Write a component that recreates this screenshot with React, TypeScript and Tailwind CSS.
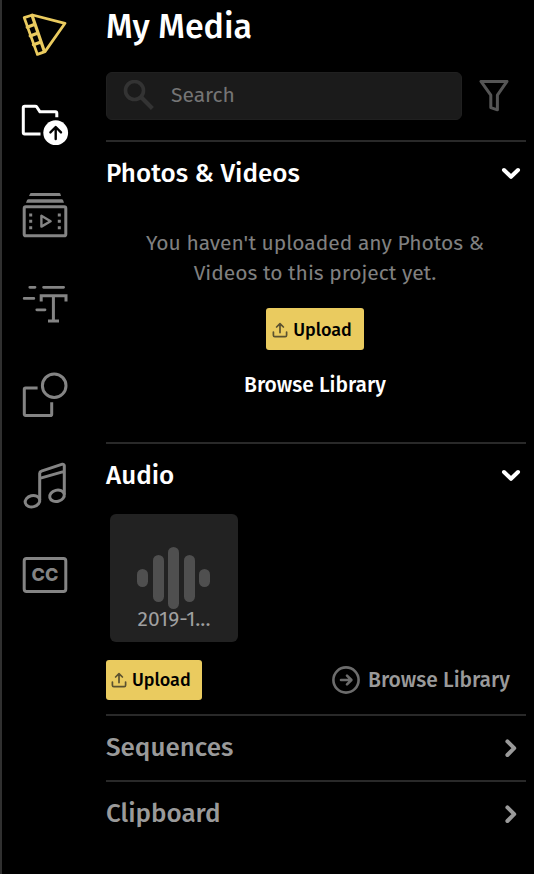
import type { ReactNode } from "react";

function RailIcon({ children }: { children: ReactNode }) {
  return (
    <svg
      viewBox="0 0 48 48"
      className="h-12 w-12"
      fill="none"
      stroke="currentColor"
      strokeWidth="3"
      strokeLinecap="round"
      strokeLinejoin="round"
      aria-hidden="true"
    >
      {children}
    </svg>
  );
}

const railItems: { label: string; tone: string; icon: ReactNode }[] = [
  {
    label: "Home",
    tone: "text-[#eacb5f]",
    icon: (
      <g strokeWidth="2.8">
        <path d="M3.2 6.6 11.5 4 44 12.3 24 40.6 16.4 43.4Z" />
        <path d="M11 4.3 23.3 40.3M6.2 16.2 13.8 13.3M9.2 24.9 17 22M12.4 33.8 20 31" strokeWidth="3.2" />
      </g>
    ),
  },
  {
    label: "My Media",
    tone: "text-white",
    icon: (
      <>
        <path d="M19.5 33H3.7a1.4 1.4 0 0 1-1.4-1.4V6.6A1.4 1.4 0 0 1 3.7 5.2H14.2a2 2 0 0 1 1.6.8L19 10.8H34.4a1.4 1.4 0 0 1 1.4 1.4V16.2" strokeLinecap="butt" />
        <circle cx="34.7" cy="31.7" r="12.4" fill="currentColor" stroke="none" />
        <path d="M34.7 38V26.4M29.4 31.4 34.7 26 40 31.4" stroke="#000" strokeWidth="2.4" />
      </>
    ),
  },
  {
    label: "Stock Media",
    tone: "text-[#848484]",
    icon: (
      <>
        <path d="M10.4 2H38a1.6 1.6 0 0 1 1.6 1.4L40 5H8L8.8 3.2A1.6 1.6 0 0 1 10.4 2Z" fill="currentColor" stroke="none" />
        <path d="M7.6 8.2H40.6a1.6 1.6 0 0 1 1.5 1.1L43 11.8H5L6 9.3A1.7 1.7 0 0 1 7.6 8.2Z" fill="currentColor" stroke="none" />
        <rect x="3.2" y="15.8" width="41.6" height="29" rx="1.6" strokeWidth="3" />
        <path d="M20.4 24.8V35.6L29.6 30.3Z" strokeWidth="2.4" />
        <path d="M8.2 22.6h3v3h-3zM8.2 28.8h3v3h-3zM8.2 35.2h3v3h-3zM36.8 22.6h3v3h-3zM36.8 28.8h3v3h-3zM36.8 35.2h3v3h-3z" fill="currentColor" stroke="none" />
      </>
    ),
  },
  {
    label: "Text",
    tone: "text-[#848484]",
    icon: (
      <>
        <path d="M8.8 6.3H14M22.6 6.3H42.6M3.2 17.4H12.8M15.8 28.8H24" strokeWidth="2.8" />
        <path d="M20.2 20.6V14.8H45V20.6M32.4 14.8V40M27 40H38" strokeLinecap="butt" strokeLinejoin="miter" />
      </>
    ),
  },
  {
    label: "Shapes",
    tone: "text-[#848484]",
    icon: (
      <>
        <circle cx="33.2" cy="14.7" r="11.8" />
        <path d="M16.6 17H4.6A1.3 1.3 0 0 0 3.3 18.3V43.2A1.3 1.3 0 0 0 4.6 44.5H29.4A1.3 1.3 0 0 0 30.7 43.2V31.2" strokeLinecap="butt" />
      </>
    ),
  },
  {
    label: "Music",
    tone: "text-[#848484]",
    icon: (
      <>
        <path d="M18.7 38.6V12.4A2.4 2.4 0 0 1 20.4 10.2L41.4 3.2A1.6 1.6 0 0 1 43.3 4.8V32.8M18.7 17.4 43.3 10.4" />
        <ellipse cx="11.5" cy="40.2" rx="7.4" ry="5.6" transform="rotate(-14 11.5 40.2)" />
        <ellipse cx="36" cy="34.8" rx="7.4" ry="5.6" transform="rotate(-14 36 34.8)" />
      </>
    ),
  },
  {
    label: "Captions",
    tone: "text-[#848484]",
    icon: (
      <>
        <rect x="3.2" y="7.5" width="41.6" height="33" rx="2.4" strokeWidth="3" />
        <text x="24" y="30.4" textAnchor="middle" fontSize="18" fontWeight="800" fill="currentColor" stroke="none" className="font-['Inter',sans-serif]">
          CC
        </text>
      </>
    ),
  },
];

function Chevron({ open }: { open: boolean }) {
  return (
    <svg viewBox="0 0 24 24" className="h-6 w-6" fill="none" stroke="currentColor" strokeWidth="4" strokeLinecap="round" strokeLinejoin="round" aria-hidden="true">
      <path d={open ? "M5 8 12 14.8 19 8" : "M8.4 5.4 15.2 12.2 8.4 19"} />
    </svg>
  );
}

function Section({ title, open = false, children }: { title: string; open?: boolean; children?: ReactNode }) {
  return (
    <section className="border-t-2 border-[#292929]">
      <h2>
        <button
          type="button"
          aria-expanded={open}
          className={`flex h-16 w-full items-center justify-between pr-[3px] pb-px text-left text-[26px] font-medium ${open ? "text-white" : "text-[#9a9a9a]"}`}
        >
          {title}
          <Chevron open={open} />
        </button>
      </h2>
      {children}
    </section>
  );
}

function UploadButton({ large = false }: { large?: boolean }) {
  return (
    <button
      type="button"
      className={`flex items-center rounded-[3px] bg-[#eacb5f] text-lg font-medium text-black ${large ? "h-[42px] gap-1 pt-px pr-3 pl-[5px]" : "h-10 gap-1 pr-[11px] pl-1"}`}
    >
      <svg viewBox="0 0 18 18" className="h-[18px] w-[18px]" fill="none" stroke="#5b5230" strokeWidth="1.7" strokeLinecap="round" strokeLinejoin="round" aria-hidden="true">
        <path d="M9 11.6V3M5.6 6 9 2.6 12.4 6M2.4 11V14.2A1.4 1.4 0 0 0 3.8 15.6H14.2A1.4 1.4 0 0 0 15.6 14.2V11" />
      </svg>
      Upload
    </button>
  );
}

export default function App() {
  return (
    <div className="flex min-h-screen border-l-2 border-[#303030] bg-black font-['Fira_Sans','Noto_Sans',sans-serif] text-white">
      <nav aria-label="Editor tools" className="flex w-[104px] shrink-0 flex-col gap-[42px] pt-[11px] pl-[19px]">
        {railItems.map((item) => (
          <button key={item.label} type="button" aria-label={item.label} className={`h-12 w-12 ${item.tone}`}>
            <RailIcon>{item.icon}</RailIcon>
          </button>
        ))}
      </nav>

      <main className="min-w-0 flex-1 pr-2">
        <h1 className="h-[72px] pt-[5px] text-[34px] leading-[44px] font-medium">My Media</h1>

        <div className="mb-5 flex items-center gap-4">
          <div className="flex h-12 min-w-0 flex-1 items-center gap-4 rounded-md border border-[#202020] bg-[#1b1b1b] pl-4">
            <svg viewBox="0 0 32 32" className="h-8 w-8 shrink-0" fill="none" stroke="#333" strokeWidth="3.6" aria-hidden="true">
              <circle cx="11.5" cy="10.5" r="9" />
              <path d="M18 17 29.4 28.4" strokeWidth="4.2" />
            </svg>
            <input
              type="search"
              aria-label="Search"
              placeholder="Search"
              className="w-full min-w-0 bg-transparent text-[21px] text-white outline-none placeholder:text-[#757575]"
            />
          </div>
          <button type="button" aria-label="Filter" className="mr-4 h-8 w-8">
            <svg viewBox="0 0 32 32" className="h-8 w-8" fill="none" stroke="#555" strokeWidth="3" strokeLinejoin="round" aria-hidden="true">
              <path d="M3 1.4H29L19.4 15.2V29.8L12.8 27.6V15.2Z" />
            </svg>
          </button>
        </div>

        <Section title="Photos & Videos" open>
          <div className="flex flex-col items-center gap-5 pt-[22px] pr-[2px] pb-[42px]">
            <p className="max-w-[350px] text-center text-[21px] leading-[30px] text-[#808080]">
              You haven't uploaded any Photos & Videos to this project yet.
            </p>
            <UploadButton large />
            <button type="button" className="text-[21px] leading-[30px] font-medium">
              Browse Library
            </button>
          </div>
        </Section>

        <Section title="Audio" open>
          <div className="px-1 pt-[6px]">
            <button type="button" className="flex h-32 w-32 flex-col items-center rounded-md bg-[#222] pt-8">
              <svg viewBox="0 0 76 64" className="h-16 w-[76px]" fill="#4f4f4f" aria-hidden="true">
                <rect x="1" y="23" width="11" height="18" rx="5.5" />
                <rect x="17" y="9" width="11" height="47" rx="5.5" />
                <rect x="32" y="1" width="11" height="62" rx="5.5" />
                <rect x="48" y="9" width="11" height="47" rx="5.5" />
                <rect x="63" y="23" width="11" height="18" rx="5.5" />
              </svg>
              <span className="-mt-1 text-[21px] leading-[26px] text-[#a0a0a0]">2019-1...</span>
            </button>
          </div>
          <div className="flex items-center justify-between pt-[18px] pr-4 pb-[14px]">
            <UploadButton />
            <button type="button" className="flex items-center gap-2 text-[21px] leading-[30px] font-medium text-[#9a9a9a]">
              <svg viewBox="0 0 28 28" className="h-7 w-7" fill="none" stroke="#6c6c6c" strokeWidth="2.6" strokeLinecap="round" strokeLinejoin="round" aria-hidden="true">
                <circle cx="14" cy="14" r="12.6" />
                <path d="M9 14H19M15 9.6 19.4 14 15 18.4" />
              </svg>
              Browse Library
            </button>
          </div>
        </Section>

        <Section title="Sequences" />
        <Section title="Clipboard" />
      </main>
    </div>
  );
}
